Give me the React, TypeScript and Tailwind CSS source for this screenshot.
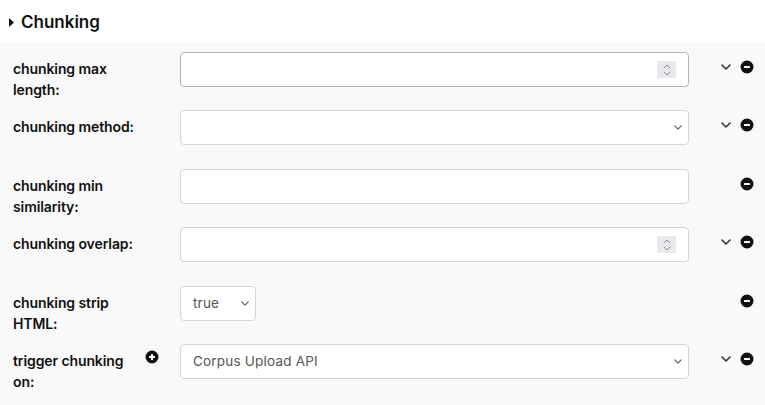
import React from 'react';

type Field = {
  label: string;
  kind: 'number' | 'select' | 'text';
  value?: string;
  narrow?: boolean;
  chevron?: boolean;
  addable?: boolean;
};

const fields: Field[] = [
  { label: 'chunking max length:', kind: 'number', chevron: true },
  { label: 'chunking method:', kind: 'select', chevron: true },
  { label: 'chunking min similarity:', kind: 'text' },
  { label: 'chunking overlap:', kind: 'number', chevron: true },
  { label: 'chunking strip HTML:', kind: 'select', value: 'true', narrow: true },
  { label: 'trigger chunking on:', kind: 'select', value: 'Corpus Upload API', chevron: true, addable: true },
];

function CircleIcon({ plus }: { plus?: boolean }) {
  return (
    <svg width="14" height="14" viewBox="0 0 14 14" className="shrink-0">
      <circle cx="7" cy="7" r="6.5" fill="#111" />
      <rect x="4" y="6" width="6" height="2" rx="0.5" fill="#fff" />
      {plus && <rect x="6" y="4" width="2" height="6" rx="0.5" fill="#fff" />}
    </svg>
  );
}

function Chevron({ className, color = '#333' }: { className?: string; color?: string }) {
  return (
    <svg width="10" height="6" viewBox="0 0 10 6" className={className}>
      <path d="M1 1l4 4 4-4" fill="none" stroke={color} strokeWidth="1.6" strokeLinecap="round" strokeLinejoin="round" />
    </svg>
  );
}

function Spinner() {
  return (
    <div className="w-[19px] h-[17px] bg-[#e9e9ed] flex flex-col items-center justify-center gap-[2px]">
      <svg width="8" height="5" viewBox="0 0 8 5">
        <path d="M0.8 4.2L4 1 7.2 4.2" fill="none" stroke="#8a8a8f" strokeWidth="1" />
      </svg>
      <svg width="8" height="5" viewBox="0 0 8 5">
        <path d="M0.8 0.8L4 4 7.2 0.8" fill="none" stroke="#8a8a8f" strokeWidth="1" />
      </svg>
    </div>
  );
}

function Control({ field, first }: { field: Field; first?: boolean }) {
  const border = first ? 'border-[#b4b4b4]' : 'border-[#d2d6dc]';
  const width = field.narrow ? 'w-[76px]' : 'w-[509px]';
  const pad = field.kind === 'number' ? 'pr-[12px]' : 'pr-[6px]';
  return (
    <div className={`${width} h-[35px] bg-white border ${border} rounded-[4px] flex items-center pl-[12px] ${pad}`}>
      <span className="flex-1 text-[13.5px] text-[#555] tracking-[0.2px]">{field.value ?? ''}</span>
      {field.kind === 'number' && <Spinner />}
      {field.kind === 'select' && <Chevron className="w-[8px] h-[5px]" color="#666" />}
    </div>
  );
}

export default function App() {
  return (
    <div className="w-[765px] h-[405px] bg-white font-['Inter',sans-serif] text-[#111] overflow-hidden">
      <div className="h-[42px] flex items-center pl-[9px] gap-[7px] pt-[3px]">
        <svg width="5" height="9" viewBox="0 0 5 9">
          <path d="M0 0l5 4.5L0 9z" fill="#111" />
        </svg>
        <span className="text-[17px] font-semibold">Chunking</span>
      </div>
      <div className="bg-[#f9f9f9] pt-[10px] h-[363px]">
        {fields.map((f, i) => (
          <div key={f.label} className="flex items-start h-[58.4px]">
            <div className="w-[180px] shrink-0 pl-[13px] pr-[21px] flex items-start justify-between pt-[6px]">
              <div className="w-[126px] text-[14px] leading-[21px] font-semibold tracking-[-0.1px]">{f.label}</div>
              {f.addable && <CircleIcon plus />}
            </div>
            <Control field={f} first={i === 0} />
            <div className="flex-1 h-[30px] flex items-center justify-end pr-[11px] gap-[9px]">
              {f.chevron && <Chevron />}
              <CircleIcon />
            </div>
          </div>
        ))}
      </div>
    </div>
  );
}
